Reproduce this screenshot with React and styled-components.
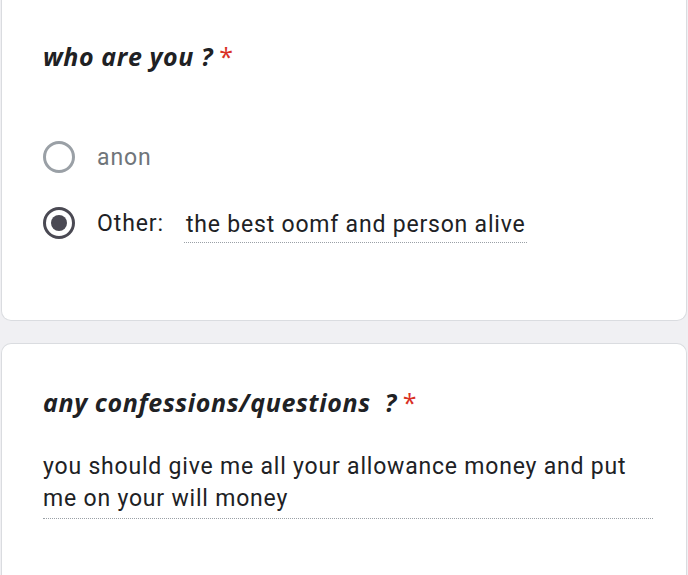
import React from 'react';
import styled, { createGlobalStyle } from 'styled-components';

const GlobalStyle = createGlobalStyle`
  html, body {
    margin: 0;
    padding: 0;
    background: #f0f0f3;
    overflow: hidden;
  }
`

const Page = styled.div`
  width: 688px;
  height: 575px;
  display: flex;
  flex-direction: column;
  gap: 22px;
  padding-left: 1px;
  box-sizing: border-box;
`

const Card = styled.div`
  background: #ffffff;
  border: 1px solid #dadce0;
  border-top: ${props => (props.cutTop ? 'none' : '1px solid #dadce0')};
  border-radius: ${props => (props.cutTop ? '0 0 10px 10px' : '10px 10px 0 0')};
  border-bottom: ${props => (props.cutTop ? '1px solid #dadce0' : 'none')};
  width: 686px;
  box-sizing: border-box;
  padding: ${props => props.pad};
  flex-shrink: 0;
  flex-grow: ${props => (props.cutTop ? 0 : 1)};
`

const Title = styled.div`
  font-family: "Open Sans", "Lato", sans-serif;
  font-style: italic;
  font-weight: 700;
  font-size: 25px;
  color: #202124;
  letter-spacing: 0.6px;
  line-height: 32px;
  white-space: pre;
`

const Star = styled.span`
  color: #d93025;
  font-style: normal;
  font-weight: 400;
  margin-left: 6px;
`

const Options = styled.div`
  display: flex;
  flex-direction: column;
  gap: 34px;
  margin-top: 69px;
`

const Option = styled.div`
  display: flex;
  align-items: center;
  height: 32px;
`

const Radio = styled.div`
  width: 32px;
  height: 32px;
  border-radius: 50%;
  box-sizing: border-box;
  border: 3px solid ${props => (props.checked ? '#4a4953' : '#9aa0a6')};
  display: flex;
  align-items: center;
  justify-content: center;
  margin-right: 22px;

  &::after {
    content: '';
    display: ${props => (props.checked ? 'block' : 'none')};
    width: 16px;
    height: 16px;
    border-radius: 50%;
    background: #4a4953;
  }
`

const Label = styled.span`
  font-family: "Roboto", sans-serif;
  font-size: 23px;
  letter-spacing: 0.9px;
  color: ${props => (props.muted ? '#70757a' : '#202124')};
`

const OtherInput = styled.span`
  font-family: "Roboto", sans-serif;
  font-size: 23px;
  letter-spacing: 0.8px;
  color: #202124;
  margin-left: 20px;
  padding: 0 2px 4px;
  border-bottom: 1px dotted #9aa0a6;
  margin-top: 8px;
`

const Answer = styled.div`
  font-family: "Roboto", sans-serif;
  font-size: 23px;
  letter-spacing: 0.8px;
  line-height: 32px;
  color: #202124;
  margin-top: 33px;
  width: 610px;
  padding-bottom: 3px;
  border-bottom: 1px dotted #9aa0a6;
`

export default function App() {
  return (
    <>
      <GlobalStyle />
      <Page>
        <Card cutTop pad="40px 40px 81px 41px">
          <Title>who are you ?<Star>*</Star></Title>
          <Options>
            <Option>
              <Radio />
              <Label muted>anon</Label>
            </Option>
            <Option>
              <Radio checked />
              <Label>Other:</Label>
              <OtherInput>the best oomf and person alive</OtherInput>
            </Option>
          </Options>
        </Card>
        <Card pad="42px 40px 0 41px">
          <Title>any confessions/questions  ?<Star>*</Star></Title>
          <Answer>you should give me all your allowance money and put me on your will money</Answer>
        </Card>
      </Page>
    </>
  );
}
